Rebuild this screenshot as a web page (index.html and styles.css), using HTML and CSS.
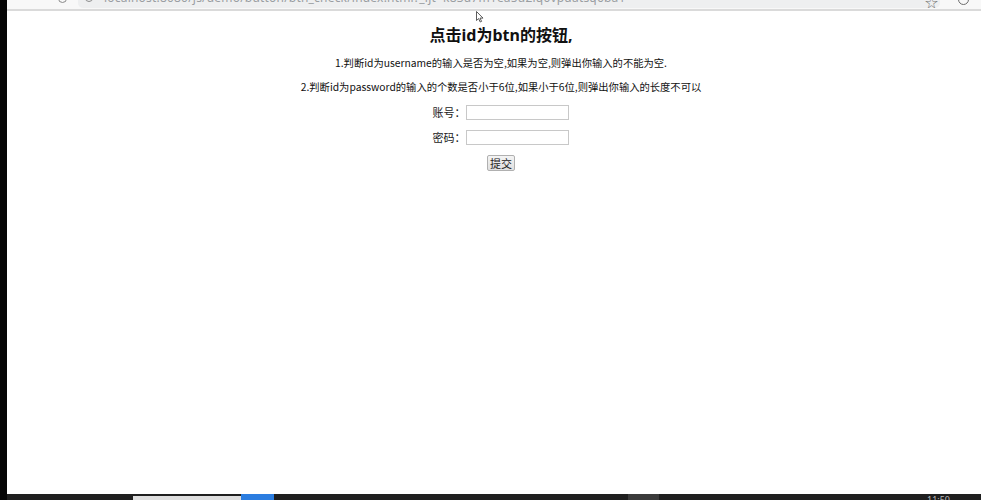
FILE: index.html
```html
<!DOCTYPE html>
<html lang="zh-CN">
<head>
<meta charset="utf-8">
<title>点击id为btn的按钮</title>
<link rel="stylesheet" href="styles.css">
</head>
<body>
<div class="screen">
  <div class="strip"></div>
  <div class="main">
    <div class="chrome">
      <div class="nav">
        <span class="ring ring-reload"></span>
      </div>
      <div class="pill">
        <span class="ring ring-info"></span>
        <span class="url">localhost:8080/js/demo/button/btn_check/index.html?_ijt=k83d7m1ea5u2lq0vpdatsq6ba1</span>
        <span class="star">☆</span>
      </div>
      <div class="right">
        <span class="ring ring-profile"></span>
      </div>
    </div>
    <div class="page">
      <h1 class="title">点击id为btn的按钮,</h1>
      <p class="rule rule-first">1.判断id为username的输入是否为空,如果为空,则弹出你输入的不能为空.</p>
      <p class="rule">2.判断id为password的输入的个数是否小于6位,如果小于6位,则弹出你输入的长度不可以</p>
      <div class="field">
        <label class="label" for="username">账号：</label>
        <input class="input" id="username" type="text">
      </div>
      <div class="field">
        <label class="label" for="password">密码：</label>
        <input class="input" id="password" type="password">
      </div>
      <div class="field">
        <button class="btn" id="btn" type="button">提交</button>
      </div>
      <svg class="cursor" width="8" height="12" viewBox="0 0 8 12">
        <path d="M0.5 0.5 L0.5 9.5 L2.6 7.6 L4.2 11 L5.6 10.4 L4 7.1 L7 7.1 Z" fill="#fff" stroke="#333" stroke-width="0.8"/>
      </svg>
    </div>
    <div class="taskbar">
      <span class="task task-light"></span>
      <span class="task task-blue"></span>
      <span class="task task-grey"></span>
      <span class="clock">11:50</span>
    </div>
  </div>
</div>
</body>
</html>
```

FILE: styles.css
```css
* { box-sizing: border-box; }

html, body {
  margin: 0;
  padding: 0;
  background: #fff;
}

body {
  font-family: "Noto Sans", "Noto Sans CJK SC", sans-serif;
  color: #222;
}

.screen {
  width: 981px;
  height: 500px;
  display: flex;
  overflow: hidden;
  background: #1e1e1e;
}

.strip {
  width: 7px;
  background: #050505;
}

.main {
  flex: 1;
  display: flex;
  flex-direction: column;
  background: #fff;
}

/* browser toolbar, cut at the top */
.chrome {
  height: 11px;
  display: flex;
  align-items: flex-start;
  background: #f8f8f8;
  border-bottom: 2px solid #dadada;
  overflow: hidden;
}

.nav {
  width: 71px;
  height: 9px;
  position: relative;
}

.ring {
  display: block;
  position: absolute;
  width: 9px;
  height: 9px;
  border: 1.5px solid #8a8a8a;
  border-radius: 50%;
}

.ring-reload { left: 51px; top: -6px; }

.pill {
  flex: 1;
  height: 8px;
  position: relative;
  background: #eeeff0;
  border-radius: 0 0 5px 5px;
  display: flex;
  align-items: flex-end;
  padding-left: 26px;
  overflow: hidden;
}

.ring-info { left: 7px; top: -6px; width: 8px; height: 8px; }

.url {
  font-size: 12px;
  line-height: 12px;
  color: #9a9ea2;
  white-space: nowrap;
  margin-bottom: 4px;
  letter-spacing: 0.2px;
}

.star {
  position: absolute;
  right: 2px;
  top: -8px;
  font-size: 13px;
  color: #777;
}

.right {
  width: 41px;
  height: 9px;
  position: relative;
}

.ring-profile { left: 18px; top: -6px; width: 11px; height: 11px; border-color: #6d6d6d; }

/* page content */
.page {
  flex: 1;
  position: relative;
  padding: 14px 0 0 14px;
  text-align: center;
}

.title {
  margin: 0;
  font-size: 16px;
  line-height: 20px;
  font-weight: 700;
  color: #111;
}

.rule {
  margin: 4px 0 0;
  font-family: "Noto Sans CJK SC", sans-serif;
  font-size: 10.3px;
  line-height: 20px;
  color: #111;
}

.rule-first { margin-top: 8px; }

.field {
  display: flex;
  justify-content: center;
  align-items: center;
  height: 20px;
  margin-top: 5px;
}

.label {
  font-family: "Noto Sans CJK SC", sans-serif;
  font-size: 11px;
  line-height: 14px;
  color: #222;
}

.input {
  width: 103px;
  height: 15px;
  margin: 0 1px 0 0;
  padding: 0 2px;
  border: 1px solid #c8c8c8;
  background: #fff;
  font-size: 11px;
}

.btn {
  height: 16px;
  margin: 1px 0 0;
  padding: 0 2px;
  font-family: "Noto Sans CJK SC", sans-serif;
  font-size: 11px;
  line-height: 12px;
  color: #222;
  border: 1px solid #b0b0b0;
  border-radius: 2px;
  background: linear-gradient(#f4f4f4, #e0e0e0);
}

.cursor {
  position: absolute;
  left: 469px;
  top: 0;
}

/* bottom taskbar */
.taskbar {
  height: 6px;
  display: flex;
  align-items: flex-end;
  background: #1f1f1f;
  position: relative;
  overflow: hidden;
}

.task { display: block; height: 4px; }

.task-light {
  width: 108px;
  margin-left: 126px;
  background: #dedede;
}

.task-blue {
  width: 33px;
  height: 6px;
  background: #2b7de0;
}

.task-grey {
  width: 31px;
  height: 6px;
  margin-left: 354px;
  background: #3b3b3b;
}

.clock {
  position: absolute;
  left: 920px;
  top: 1px;
  font-size: 9px;
  line-height: 9px;
  color: #bbb;
}
```
